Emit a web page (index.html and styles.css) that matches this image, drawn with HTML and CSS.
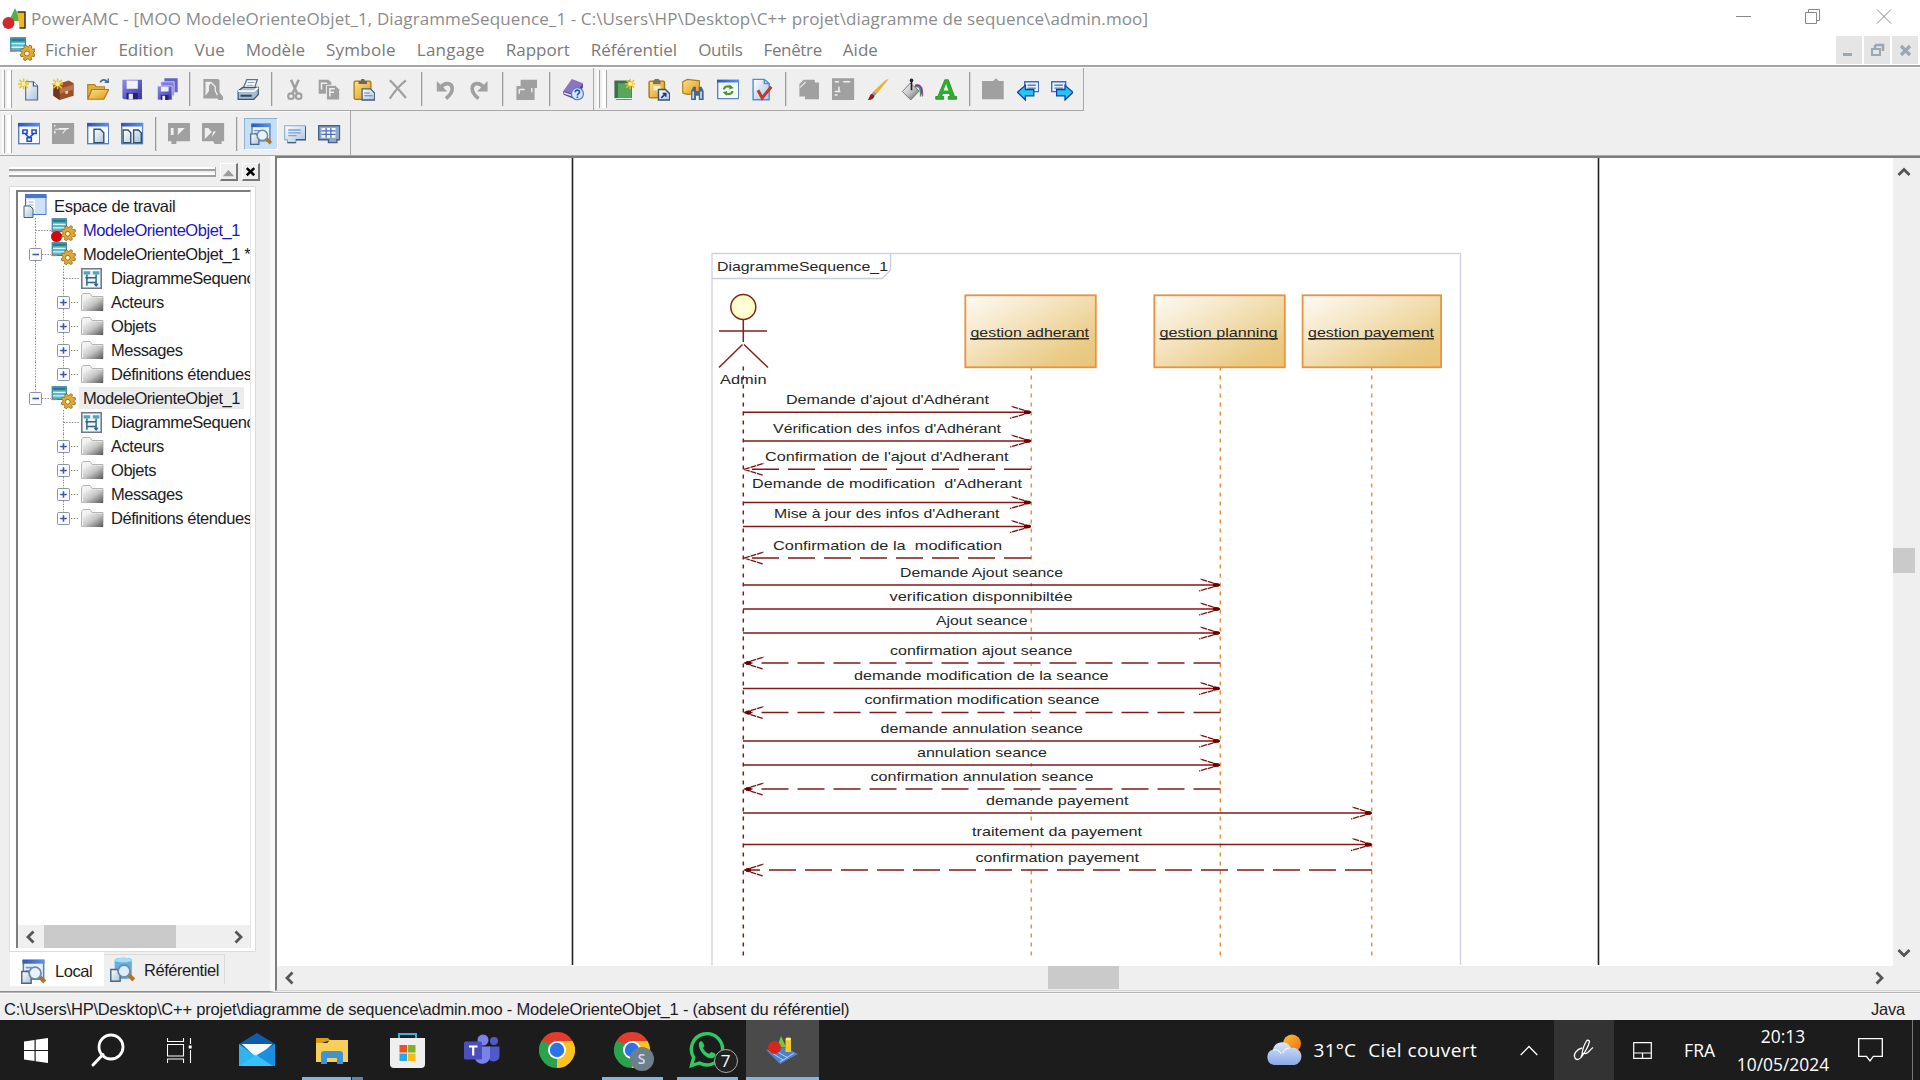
FILE: index.html
```html
<!DOCTYPE html>
<html lang="fr">
<head>
<meta charset="utf-8">
<title>PowerAMC</title>
<link rel="stylesheet" href="styles.css">
</head>
<body>
<svg class="defs" aria-hidden="true">
  <defs>
    <linearGradient id="gSheet" x1="0" y1="0" x2="1" y2="1"><stop offset="0" stop-color="#fff"/><stop offset="1" stop-color="#a9c3de"/></linearGradient>
    <linearGradient id="gBlue" x1="0" y1="0" x2="1" y2="1"><stop offset="0" stop-color="#8d8de8"/><stop offset="1" stop-color="#3434a4"/></linearGradient>
    <linearGradient id="gGold" x1="0" y1="0" x2="1" y2="1"><stop offset="0" stop-color="#ffe28a"/><stop offset="1" stop-color="#d9981c"/></linearGradient>
    <linearGradient id="gGrey" x1="0" y1="0" x2="1" y2="1"><stop offset="0" stop-color="#fafafa"/><stop offset=".5" stop-color="#c4c4c4"/><stop offset="1" stop-color="#555"/></linearGradient>
    <linearGradient id="gBar" x1="0" y1="0" x2="1" y2="0"><stop offset="0" stop-color="#2d55b8"/><stop offset="1" stop-color="#5d93ee"/></linearGradient>
    <linearGradient id="gCard" x1="0" y1="0" x2="1" y2="1"><stop offset="0" stop-color="#fffdf8"/><stop offset=".1" stop-color="#fbf5e9"/><stop offset=".8" stop-color="#eacb85"/><stop offset="1" stop-color="#e8c678"/></linearGradient>
    <radialGradient id="gHead"><stop offset="0" stop-color="#ffffe4"/><stop offset="1" stop-color="#ffffc4"/></radialGradient>
    <linearGradient id="gCloud" x1="0" y1="0" x2="0" y2="1"><stop offset="0" stop-color="#dbe6fb"/><stop offset="1" stop-color="#88a9e6"/></linearGradient>
    <linearGradient id="gSun" x1="0" y1="0" x2="1" y2="1"><stop offset="0" stop-color="#fbc02d"/><stop offset="1" stop-color="#ee6c10"/></linearGradient>
  </defs>

  <symbol id="spark" viewBox="0 0 8 8"><path d="M4 0v8M0 4h8M1 1l6 6M7 1L1 7" stroke="#f2c01e" stroke-width="1.1"/><circle cx="4" cy="4" r="1.5" fill="#fff3a0"/></symbol>
  <symbol id="new" viewBox="0 0 16 16"><path d="M5.500 2.500h5.500l3 3v10h-8.500z" fill="url(#gSheet)" stroke="#4f6a86" stroke-width=".8"/><path d="M11 2.500v3h3" fill="#fff" stroke="#33506e" stroke-width=".8"/><use href="#spark" width="8" height="8"/></symbol>
  <symbol id="case" viewBox="0 0 16 16"><path d="M1 5l11-3.500 3.500 2v9l-10 3-4.500-3z" fill="#96512c"/><path d="M1 5l4.500 2.500v8l-4.500-3z" fill="#6f361a"/><path d="M5.500 7.500l10-3v3.500l-10 3z" fill="#bb7449"/><path d="M9.500 9h2v2h-2z" fill="#f3cda6"/><use href="#spark" width="8" height="8"/></symbol>
  <symbol id="open" viewBox="0 0 16 16"><path d="M.5 14.500v-10h5l1 1.500h6v2.500h-9z" fill="#e2b03e" stroke="#b5831c" stroke-width=".8"/><path d="M.5 15l3-7h12l-3.500 7z" fill="url(#gGold)" stroke="#b17a10" stroke-width=".8"/><path d="M9.500 3c1-2.500 4-2.500 5 0M12.700 2.800h2.600V.2" fill="none" stroke="#4b6f94" stroke-width="1.200"/></symbol>
  <symbol id="save" viewBox="0 0 16 16"><path d="M1 1h14v14H2l-1-1z" fill="url(#gBlue)"/><path d="M4 1.500h8v6H4z" fill="#f3f4fb"/><path d="M4 10.500h8V15H4z" fill="#23236f"/><path d="M5.500 11h3v4h-3z" fill="#e8e8f4"/></symbol>
  <symbol id="saveall" viewBox="0 0 16 16"><path d="M6 0h9.500v10H6z" fill="#6262ca"/><path d="M3.500 2.500H13v10H3.500z" fill="#7c7ce0" stroke="#ebebfa" stroke-width=".5"/><path d="M1 5.500h10.500v10H1z" fill="url(#gBlue)" stroke="#ebebfa" stroke-width=".5"/><path d="M3.500 6h5.500v3.500H3.500z" fill="#eef"/><path d="M3.500 12H9v3.500H3.500z" fill="#23236f"/><path d="M4.500 12.500h2v3h-2z" fill="#eef"/></symbol>
  <symbol id="preview" viewBox="0 0 16 16"><path d="M1 .5h10.500l1 1v8.500l2.500 3v2.500h-3l-1-1H1z" fill="#a0a0a0"/><path d="M6.500 3l3 3v3l1.500 3" fill="none" stroke="#efefef" stroke-width=".9"/><path d="M2.500 2.500H7L5 5.500V9l-2.500 3.500z" fill="#efefef"/></symbol>
  <symbol id="print" viewBox="0 0 16 16"><path d="M4.500 7l2.500-6h7.500l-2 6z" fill="#fff" stroke="#57718c" stroke-width=".9"/><path d="M7.500 3h5M6.800 5h5" stroke="#8ca0b5" stroke-width=".8"/><path d="M.8 9L4 6.500h11.200v5L12 15H.8z" fill="#a9bccf" stroke="#3e5872" stroke-width=".9"/><path d="M.8 9.200H12l3-2.500" fill="none" stroke="#fff" stroke-width="1.300"/><path d="M2.500 12.500h8" stroke="#2e4a68" stroke-width="1.400"/></symbol>
  <symbol id="cut" viewBox="0 0 16 16"><path d="M5 1l4.500 10M10.500 1L6 11" stroke="#a0a0a0" stroke-width="1.800" fill="none"/><circle cx="5" cy="12.800" r="2" fill="none" stroke="#a0a0a0" stroke-width="1.500"/><circle cx="10.500" cy="12.800" r="2" fill="none" stroke="#a0a0a0" stroke-width="1.500"/></symbol>
  <symbol id="copy" viewBox="0 0 16 16"><path d="M.5 1h7l2 2v8h-9z" fill="#a0a0a0"/><path d="M6 5h6.500L15.500 8v7.500H6z" fill="#a0a0a0" stroke="#efefef" stroke-width=".7"/><path d="M2.500 8V3.500h4M8.500 13V7.500h3.500M8.500 10h3" fill="none" stroke="#efefef" stroke-width="1.100"/></symbol>
  <symbol id="paste" viewBox="0 0 16 16"><rect x=".8" y="2" width="12" height="13" rx="1" fill="url(#gGold)" stroke="#a8740f" stroke-width=".9"/><path d="M4 4V2h1.500L6 .5h2L8.500 2H10v2z" fill="#6d675c"/><path d="M6.500 7.500h6l3 3v5h-9z" fill="url(#gSheet)" stroke="#425c7a" stroke-width=".9"/><path d="M8 10.500h4M8 12.500h6" stroke="#6486ad" stroke-width=".8"/></symbol>
  <symbol id="del" viewBox="0 0 16 16"><path d="M2 1.500C6 5 10 10 13.500 14M13.500 1.500C9 5 5 10 2 14.500" stroke="#a0a0a0" stroke-width="1.600" fill="none"/></symbol>
  <symbol id="undo" viewBox="0 0 16 16"><path d="M5 6.500c2.500-4 8-3.500 8 1 0 3-2 5-4.500 7" stroke="#a0a0a0" stroke-width="2.600" fill="none"/><path d="M2 2v7.500h7.500z" fill="#a0a0a0"/></symbol>
  <symbol id="redo" viewBox="0 0 16 16"><path d="M11 6.500c-2.500-4-8-3.500-8 1 0 3 2 5 4.500 7" stroke="#a0a0a0" stroke-width="2.600" fill="none"/><path d="M14 2v7.500H6.500z" fill="#a0a0a0"/></symbol>
  <symbol id="prop" viewBox="0 0 16 16"><path d="M4 1h12v6h-2v8.500H1v-10h3z" fill="#a0a0a0"/><path d="M3 8h4M3 8v3M12 7v3" stroke="#efefef" stroke-width="1"/></symbol>
  <symbol id="help" viewBox="0 0 16 16"><path d="M1 9L7 .5 15 3.500 10 13 1.500 12z" fill="#8a74c4"/><path d="M1 9l8 2.500L15 3.500v3L9 15 1 11.500z" fill="#5a4594"/><path d="M1.500 10.500L9 13" stroke="#e6e0f5" stroke-width="1"/><circle cx="11" cy="11" r="4.300" fill="#d7e6fb" stroke="#5c7fc2" stroke-width=".9"/><path d="M9.500 10c0-2 3.200-2 3 0 0 1-1.500 1-1.500 2.200M11 13v1" stroke="#2456a8" stroke-width="1.200" fill="none"/></symbol>
  <symbol id="book" viewBox="0 0 16 16"><path d="M1 1.500h11l1.500 1.500v12.500H2.500L1 14z" fill="#3e6e4a"/><path d="M3.500 3.500h9.500v10.500H3.500z" fill="#5aa55c"/><path d="M1.500 14.500h12" stroke="#dfe" stroke-width=".8"/><use href="#spark" x="8.500" y="0" width="7.500" height="8"/></symbol>
  <symbol id="pastelink" viewBox="0 0 16 16"><rect x=".8" y="2" width="11" height="12" rx="1" fill="url(#gGold)" stroke="#a8740f"/><path d="M3.500 4V2.200l1.500-1.700h2.500L9 2.200V4z" fill="#7c7156"/><path d="M4 5.500h5v3H4z" fill="#fff3cd"/><path d="M7.500 8h5l3 3v4.500h-8z" fill="url(#gSheet)" stroke="#39536f"/><path d="M9.500 14l3-3M10.500 10.800h2.200v2.400" stroke="#1d2c96" stroke-width="1.100" fill="none"/></symbol>
  <symbol id="find" viewBox="0 0 16 16"><path d="M.5 2.500L4 .8l8.500 1v9L4 11.500l-3.500-1z" fill="url(#gGold)" stroke="#b27c16" stroke-width=".8"/><path d="M6.500 9.500V9L8 6h2v3h2V6h2l1.500 3v6.500H12v-3h-2v3H6.500z" fill="#48698f"/><path d="M8 9.500v5M13.600 9.500v5" stroke="#c8def3" stroke-width="1.200"/></symbol>
  <symbol id="refresh" viewBox="0 0 16 16"><path d="M.5 1.500h15v13H.5z" fill="#f4f9ff" stroke="#6085b5"/><path d="M0 1h16v2H0z" fill="url(#gBar)"/><path d="M5 8c0-2 3-3 5-1.500M11 9c0 2-3 3-5 1.500" stroke="#4b9a1f" stroke-width="1.500" fill="none"/><path d="M9 4.500L12 7 8.800 8zM7 12.500L4 10l3.200-1z" fill="#4b9a1f"/></symbol>
  <symbol id="check" viewBox="0 0 16 16"><path d="M1.500.8h8l3.500 3v11.500H1.500z" fill="url(#gSheet)" stroke="#4a8fd8"/><path d="M9.500.8v3H13" fill="none" stroke="#4a8fd8"/><path d="M5 8.500l3 5.500 6.500-8" fill="none" stroke="#b93a36" stroke-width="2.200"/></symbol>
  <symbol id="grA" viewBox="0 0 16 16"><path d="M1 4l3-3h8v2h3v12H5v-2H1z" fill="#a0a0a0"/><path d="M1.500 6.500l4-4" stroke="#efefef" stroke-width=".8"/></symbol>
  <symbol id="grB" viewBox="0 0 16 16"><path d="M0 0h16v15.500H0z" fill="#a0a0a0"/><path d="M2 2.500h3M8 2.500h5M5 6v3M2 9.500h4M2 12h2" stroke="#efefef" stroke-width="1.100"/></symbol>
  <symbol id="brush" viewBox="0 0 16 16"><path d="M15.500.5L7 11 4.500 9.500 13.500 1z" fill="#e7b233"/><path d="M7 11L4.500 9.500 3.500 11 5.500 12.500z" fill="#8d98a8"/><path d="M5.500 12.500l-2-1.500c-2 1-1.500 3-3 4.500 2.500.2 4.500-.8 5-3z" fill="#8c1f16"/></symbol>
  <symbol id="bucket" viewBox="0 0 16 16"><path d="M6.500 3.500L13 9l-6 6.500L1 9.500z" fill="url(#gGrey)" stroke="#777" stroke-width=".7"/><path d="M7.500 8.500V1.500" stroke="#223" stroke-width="1.200"/><circle cx="7.500" cy="1.500" r="1.300" fill="#223"/><path d="M10 5c3-1.500 6 1 5.500 8" fill="none" stroke="#d83bb3" stroke-width="1.100"/><path d="M10 6.200c3-1.200 4.300 1 4 6.800" fill="none" stroke="#3aa53a" stroke-width="1.100"/><path d="M10 5.500c3-1.500 5.200 1 4.800 6" fill="none" stroke="#3548cf" stroke-width=".9"/></symbol>
  <symbol id="fontA" viewBox="0 0 16 16"><path d="M7 1h2.500l4.500 12h1.500v2H9.500v-2H11l-.8-2.200H5.500L4.700 13h1.500v2H.5v-2H2z" fill="#2fb02d" stroke="#15801a" stroke-width=".5"/><path d="M7.900 4L6.200 8.800h3.400z" fill="#efefef"/></symbol>
  <symbol id="grC" viewBox="0 0 16 16"><path d="M0 2h8l2-2 2 2h3.500v13H0z" fill="#a0a0a0"/></symbol>
  <symbol id="prev" viewBox="0 0 16 16"><path d="M5.500 2.500h10v7h-10z" fill="#e6f0fd" stroke="#3c6fc4"/><path d="M7.500 5h6M7.500 7h6" stroke="#6a7fb0"/><path d="M.3 10L6 5v3h6v4.500H6v3z" fill="#23c5f3" stroke="#0c3fae" stroke-width=".9"/></symbol>
  <symbol id="next" viewBox="0 0 16 16"><path d="M.5 2.500h10v7H.5z" fill="#e6f0fd" stroke="#3c6fc4"/><path d="M2.500 5h6M2.500 7h6" stroke="#6a7fb0"/><path d="M15.700 10L10 5v3H4v4.500h6v3z" fill="#23c5f3" stroke="#0c3fae" stroke-width=".9"/></symbol>
  <symbol id="win" viewBox="0 0 16 16"><path d="M.5.8h15v14.500H.5z" fill="#f6faff" stroke="#5b80b5"/><path d="M0 .5h16V3H0z" fill="url(#gBar)"/></symbol>
  <symbol id="w1" viewBox="0 0 16 16"><use href="#win" width="16" height="16"/><path d="M3.500 5.500h3v2.500h-3zM10 5.500h3v2.500h-3zM6.500 11h3v2.500h-3zM5 8l3 3 3.500-3" fill="none" stroke="#2449cf" stroke-width="1.100"/></symbol>
  <symbol id="w2" viewBox="0 0 16 16"><path d="M0 .5h16v15H0z" fill="#a0a0a0"/><path d="M1.500 2.500h1M5 4.500h7M2 6v2" stroke="#efefef" stroke-width="1"/><path d="M2 5h8l-2.500 3" fill="none" stroke="#efefef" stroke-width=".8"/></symbol>
  <symbol id="w3" viewBox="0 0 16 16"><use href="#win" width="16" height="16"/><path d="M5 5h4.500l2.500 2.500v7H5z" fill="url(#gSheet)" stroke="#33506e"/></symbol>
  <symbol id="w4" viewBox="0 0 16 16"><use href="#win" width="16" height="16"/><path d="M1.500 5.500H5L7 7.500v7H1.500zM9 5.500h3.500l2 2v7H9z" fill="url(#gSheet)" stroke="#33506e"/></symbol>
  <symbol id="w5" viewBox="0 0 16 16"><path d="M0 .5h16v13H6v2H2.500v-2H0z" fill="#a0a0a0"/><path d="M2 4h2v5H2zM7 4h5L7 9z" fill="#efefef"/></symbol>
  <symbol id="w6" viewBox="0 0 16 16"><path d="M0 .5h16v13h-2v2H9l-1-2H0z" fill="#a0a0a0"/><path d="M2 4h2.500L7 7l-5 5zM8 6.500h2l-3 4z" fill="#efefef"/></symbol>
  <symbol id="lens" viewBox="0 0 16 16"><path d="M.5 8h4l2 2v5.500h-6z" fill="url(#gSheet)" stroke="#4a6684" stroke-width=".9"/><path d="M12 11.500l3.200 3.200" stroke="#b0742c" stroke-width="2.600"/><circle cx="9" cy="9" r="3.800" fill="#e8f2fc" fill-opacity=".92" stroke="#7089a3" stroke-width="1.100"/></symbol>
  <symbol id="w7" viewBox="0 0 16 16"><path d="M1.500.8h13V13h-13z" fill="#e6f1ff" stroke="#5b80b5"/><path d="M1 .5h14V3H1z" fill="url(#gBar)"/><path d="M3 5.500h4M3 7.500h2" stroke="#7a96c4"/><use href="#lens" width="16" height="16"/></symbol>
  <symbol id="dbl" viewBox="0 0 16 16"><path d="M3 2c0-2 11-2 11 0v11c0 1.500-11 1.500-11 0z" fill="#5eb0e6"/><ellipse cx="8.500" cy="2" rx="5.500" ry="1.500" fill="#a9dbf7"/><use href="#lens" width="16" height="16"/></symbol>
  <symbol id="w8" viewBox="0 0 16 16"><path d="M.5 2.500h15v10h-7v2h-6v-2h-2z" fill="url(#gSheet)" stroke="#8aa9cc" stroke-width=".8"/><path d="M8.500 14.500h-6M15.500 3v9.500h-7" stroke="#3d5d88" fill="none"/><path d="M3 5.500h9M3 7.500h9M3 9.500h6" stroke="#7ba3d6" stroke-width=".9"/></symbol>
  <symbol id="w9" viewBox="0 0 16 16"><path d="M.5 2.500h15v10h-2v2h-6v-2h-7z" fill="#8fa8c9" stroke="#46618c"/><path d="M2.500 4h10v7h-10z" fill="#f4f8ff"/><path d="M2.500 6.200h10M2.500 8.600h10M5.800 4v7M9.200 4v7" stroke="#4a6bb5" stroke-width=".9"/></symbol>
  <symbol id="model" viewBox="0 0 17 17"><path d="M.5.5h10v9H.5z" fill="#58b9c9" stroke="#35809a" stroke-width=".8"/><path d="M1 1h9v2H1z" fill="#2c7d92"/><path d="M1 4.500h9M1 7h9" stroke="#dff5f8"/><path d="M0 9.500h4" stroke="#e06b6b"/><path d="M15.400 11.200l1.300.6-.6 1.600-1.400-.3-.8.900.4 1.400-1.500.8-.9-1.100h-1.100l-.8 1.200-1.600-.7.400-1.400-.8-.9-1.400.2-.6-1.600 1.300-.8v-1.100l-1.300-.7.700-1.600 1.400.3.800-.8-.3-1.400 1.600-.7.700 1.200h1.200l.8-1.200 1.500.8-.4 1.400.8.800 1.400-.3.600 1.600-1.200.8z" transform="translate(1.200 .6) scale(.95)" fill="#e2a936" stroke="#8f6414" stroke-width=".6"/><circle cx="11.500" cy="11.200" r="1.700" fill="#fff5dc" stroke="#8f6414" stroke-width=".6"/></symbol>
  <symbol id="diag" viewBox="0 0 16 16"><path d="M.6.6h14.800v14.800H.6z" fill="#eef6fb" stroke="#707a84" stroke-width="1.200"/><path d="M2 2.500h5v2.500H2zM9 2.500h5v2.500H9z" fill="#58a3be"/><path d="M4.500 5v8.500M11.500 5v8.500M4.500 7.500h7M4.500 11h7" stroke="#2f6480" stroke-width="1.100"/><path d="M9.500 12h4l-2 2.500zM2.800 7l3.400 0-1.700 2z" fill="#2f6480"/></symbol>
  <symbol id="folder" viewBox="0 0 24 20"><path d="M1.500 18.500V3.500L3 1.500h7l2 3H23v14z" fill="#f2f2f2" stroke="#b5b5b5"/><path d="M3 5.500h20v13.500H3z" fill="url(#gGrey)"/></symbol>
  <symbol id="wksp" viewBox="0 0 24 24"><path d="M2.500 1.500h20.500v19H2.500z" fill="#cfe0fa" stroke="#4b78c4"/><path d="M2 0h21.500v4H2z" fill="#4775d6"/><path d="M4 5.500h8v13H4z" fill="#fff"/><path d="M5.500 8h5M5.500 11h5M5.500 14h5" stroke="#86a8dc"/><path d="M1 12h6l3 3v8.500H1z" fill="url(#gSheet)" stroke="#4a5e75"/></symbol>
  <symbol id="gleaf" viewBox="0 0 34 24"><path d="M18.500 0v24M18.500 12.500H34" stroke="#8a8a8a" stroke-dasharray="1.400 1.400" fill="none"/></symbol>
  <symbol id="gv" viewBox="0 0 34 24"><path d="M18.500 0v24" stroke="#8a8a8a" stroke-dasharray="1.400 1.400"/></symbol>
  <symbol id="gminus" viewBox="0 0 34 24"><path d="M18.500 0v6M18.500 19v5M25 12.500h9" stroke="#8a8a8a" stroke-dasharray="1.400 1.400"/><rect x="12.500" y="6.500" width="12" height="12" rx="1" fill="#fafafa" stroke="#8c96a2"/><path d="M15.500 12.500h6.500" stroke="#3b55a4" stroke-width="1.500"/></symbol>
  <symbol id="gminusl" viewBox="0 0 34 24"><path d="M18.500 0v6M25 12.500h9" stroke="#8a8a8a" stroke-dasharray="1.400 1.400"/><rect x="12.500" y="6.500" width="12" height="12" rx="1" fill="#fafafa" stroke="#8c96a2"/><path d="M15.500 12.500h6.500" stroke="#3b55a4" stroke-width="1.500"/></symbol>
  <symbol id="sleaf" viewBox="0 0 29 24"><path d="M12.500 0v24M12.500 12.500H28" stroke="#8a8a8a" stroke-dasharray="1.400 1.400" fill="none"/></symbol>
  <symbol id="splus" viewBox="0 0 29 24"><path d="M12.500 0v6M12.500 19v5M20 12.500h8" stroke="#8a8a8a" stroke-dasharray="1.400 1.400"/><rect x="6.500" y="6.500" width="12" height="12" rx="1" fill="#fafafa" stroke="#8c96a2"/><path d="M9.200 12.500h6.600M12.500 9.200v6.600" stroke="#3b55a4" stroke-width="1.500"/></symbol>
  <symbol id="splusl" viewBox="0 0 29 24"><path d="M12.500 0v6M20 12.500h8" stroke="#8a8a8a" stroke-dasharray="1.400 1.400"/><rect x="6.500" y="6.500" width="12" height="12" rx="1" fill="#fafafa" stroke="#8c96a2"/><path d="M9.200 12.500h6.600M12.500 9.200v6.600" stroke="#3b55a4" stroke-width="1.500"/></symbol>
  <symbol id="al" viewBox="0 0 12 14"><path d="M9.500 1.500L4 7l5.500 5.500" fill="none" stroke="#555" stroke-width="2.800"/></symbol>
  <symbol id="ar" viewBox="0 0 12 14"><path d="M2.500 1.500L8 7l-5.500 5.500" fill="none" stroke="#555" stroke-width="2.800"/></symbol>
  <symbol id="au" viewBox="0 0 14 12"><path d="M1.500 9L7 3.500 12.500 9" fill="none" stroke="#555" stroke-width="2.800"/></symbol>
  <symbol id="ad" viewBox="0 0 14 12"><path d="M1.500 3L7 8.500 12.500 3" fill="none" stroke="#555" stroke-width="2.800"/></symbol>
  <symbol id="chrome" viewBox="0 0 36 36"><path d="M18 18L2.410 9A18 18 0 0 1 33.590 9z" fill="#e33b2e"/><path d="M18 18L33.590 9A18 18 0 0 1 18 36z" fill="#fcc31e"/><path d="M18 18L18 36A18 18 0 0 1 2.410 9z" fill="#2ba24c"/><path d="M18 9h15.590L26 18z" fill="#fcc31e"/><path d="M10.200 22.500L2.410 9 12 12z" fill="#2ba24c"/><path d="M25.800 22.500L18 36l8-2 6-12-3-9z" fill="#fcc31e"/><circle cx="18" cy="18" r="9" fill="#fff"/><circle cx="18" cy="18" r="7.200" fill="#2a74e8"/></symbol>
  <symbol id="arrR" viewBox="0 0 24 16" overflow="visible"><path d="M24 8L4 2M24 8L3 14" stroke="#7c1010" stroke-width="1.300" stroke-dasharray="6 .8" fill="none"/><path d="M17 6.200h5.500L24 8l-1.500 1.800H17z" fill="#6e0000"/></symbol>
  <symbol id="arrL" viewBox="0 0 24 16" overflow="visible"><path d="M0 8l20-6M0 8l19 6" stroke="#7c1010" stroke-width="1.300" stroke-dasharray="6 .8" fill="none"/></symbol>
  <symbol id="arrLF" viewBox="0 0 24 16" overflow="visible"><use href="#arrL" width="24" height="16"/><path d="M7 6.200H2.500L1 8l1.500 1.800H7z" fill="#6e0000"/></symbol>
</svg>

<header class="titlebar">
  <svg class="app" viewBox="0 0 24 24"><path d="M7 14L13 1l6 13z" fill="#4fb04f"/><circle cx="6.500" cy="16" r="6" fill="#d02a2a"/><path d="M15.500 5h7.500v16h-5.500" fill="#f3b623" stroke="#3a3020" stroke-width="1.500"/></svg>
  <span class="t title">PowerAMC - [MOO ModeleOrienteObjet_1, DiagrammeSequence_1 - C:\Users\HP\Desktop\C++ projet\diagramme de sequence\admin.moo]</span>
  <svg class="winctl" viewBox="0 0 156 18" fill="none" stroke="#888"><path d="M0 8.500h15M69.500 4.500h11v11h-11zM72.500 4V1.500h11v11H81M141 1.500l14 14M155 1.500l-14 14"/></svg>
</header>

<nav class="menubar">
  <svg class="mico" viewBox="0 0 17 17"><use href="#model"/></svg>
  <span class="t">Fichier</span><span class="t">Edition</span><span class="t">Vue</span><span class="t">Modèle</span><span class="t wide">Symbole</span><span class="t wide">Langage</span><span class="t">Rapport</span><span class="t">Référentiel</span><span class="t tight">Outils</span><span class="t tight">Fenêtre</span><span class="t">Aide</span>
  <div class="mdi">
    <svg viewBox="0 0 26 28"><path d="M7 17h9v3H7z" fill="#9aa8b5"/></svg>
    <svg viewBox="0 0 26 28"><path d="M11 9h8v6M11 9v3" fill="none" stroke="#9aa8b5" stroke-width="2.500"/><path d="M8 13h8v6H8z" fill="none" stroke="#9aa8b5" stroke-width="2"/></svg>
    <svg viewBox="0 0 26 28"><path d="M9 10l9 9M18 10l-9 9" stroke="#9aa8b5" stroke-width="3.200"/></svg>
  </div>
</nav>

<section class="bars">
  <div class="row">
    <div class="bar">
      <i class="grip"></i>
      <svg><use href="#new"/></svg><svg><use href="#case"/></svg><svg><use href="#open"/></svg><svg><use href="#save"/></svg><svg><use href="#saveall"/></svg><i class="sep"></i>
      <svg><use href="#preview"/></svg><svg><use href="#print"/></svg><i class="sep"></i>
      <svg><use href="#cut"/></svg><svg><use href="#copy"/></svg><svg><use href="#paste"/></svg><svg><use href="#del"/></svg><i class="sep"></i>
      <svg><use href="#undo"/></svg><svg><use href="#redo"/></svg><i class="sep"></i>
      <svg><use href="#prop"/></svg><i class="sep"></i>
      <svg><use href="#help"/></svg>
    </div>
    <div class="bar second">
      <i class="grip"></i>
      <svg><use href="#book"/></svg><svg><use href="#pastelink"/></svg><svg><use href="#find"/></svg><svg><use href="#refresh"/></svg><svg><use href="#check"/></svg><i class="sep"></i>
      <svg><use href="#grA"/></svg><svg><use href="#grB"/></svg><svg><use href="#brush"/></svg><svg><use href="#bucket"/></svg><svg><use href="#fontA"/></svg><i class="sep"></i>
      <svg><use href="#grC"/></svg><svg><use href="#prev"/></svg><svg><use href="#next"/></svg>
    </div>
  </div>
  <div class="row">
    <div class="bar">
      <i class="grip"></i>
      <svg><use href="#w1"/></svg><svg><use href="#w2"/></svg><svg><use href="#w3"/></svg><svg><use href="#w4"/></svg><i class="sep"></i>
      <svg><use href="#w5"/></svg><svg><use href="#w6"/></svg><i class="sep"></i>
      <svg class="on"><use href="#w7"/></svg><svg><use href="#w8"/></svg><svg><use href="#w9"/></svg>
    </div>
  </div>
</section>

<main class="main">
  <aside class="panel">
    <div class="phead">
      <i class="lines"></i>
      <svg class="pb" viewBox="0 0 16 16"><path d="M2 13l6-6.500 6 6.500z" fill="#9b9b9b"/></svg>
      <svg class="pb" viewBox="0 0 16 16"><path d="M4 4.500l8 7.500M12 4.500l-8 7.500" stroke="#000" stroke-width="2.600"/></svg>
    </div>
    <div class="pbox">
      <div class="tree">
        <div class="nodes">
          <div class="n root"><svg class="iw"><use href="#wksp"/></svg><span class="t esp">Espace de travail</span></div>
          <div class="n"><svg class="g1"><use href="#gleaf"/></svg><span class="im"><svg><use href="#model"/></svg><i class="dot"></i></span><span class="t lk m">ModeleOrienteObjet_1</span></div>
          <div class="n"><svg class="g1"><use href="#gminus"/></svg><span class="im"><svg><use href="#model"/></svg></span><span class="t m">ModeleOrienteObjet_1 *</span></div>
          <div class="n"><svg class="g1"><use href="#gv"/></svg><svg class="g2"><use href="#sleaf"/></svg><svg class="id"><use href="#diag"/></svg><span class="t">DiagrammeSequenc</span></div>
          <div class="n"><svg class="g1"><use href="#gv"/></svg><svg class="g2"><use href="#splus"/></svg><svg class="if"><use href="#folder"/></svg><span class="t">Acteurs</span></div>
          <div class="n"><svg class="g1"><use href="#gv"/></svg><svg class="g2"><use href="#splus"/></svg><svg class="if"><use href="#folder"/></svg><span class="t">Objets</span></div>
          <div class="n"><svg class="g1"><use href="#gv"/></svg><svg class="g2"><use href="#splus"/></svg><svg class="if"><use href="#folder"/></svg><span class="t">Messages</span></div>
          <div class="n"><svg class="g1"><use href="#gv"/></svg><svg class="g2"><use href="#splusl"/></svg><svg class="if"><use href="#folder"/></svg><span class="t">Définitions étendues</span></div>
          <div class="n"><svg class="g1"><use href="#gminusl"/></svg><span class="im"><svg><use href="#model"/></svg></span><span class="t m sel">ModeleOrienteObjet_1</span></div>
          <div class="n"><svg class="g1"></svg><svg class="g2"><use href="#sleaf"/></svg><svg class="id"><use href="#diag"/></svg><span class="t">DiagrammeSequenc</span></div>
          <div class="n"><svg class="g1"></svg><svg class="g2"><use href="#splus"/></svg><svg class="if"><use href="#folder"/></svg><span class="t">Acteurs</span></div>
          <div class="n"><svg class="g1"></svg><svg class="g2"><use href="#splus"/></svg><svg class="if"><use href="#folder"/></svg><span class="t">Objets</span></div>
          <div class="n"><svg class="g1"></svg><svg class="g2"><use href="#splus"/></svg><svg class="if"><use href="#folder"/></svg><span class="t">Messages</span></div>
          <div class="n"><svg class="g1"></svg><svg class="g2"><use href="#splusl"/></svg><svg class="if"><use href="#folder"/></svg><span class="t">Définitions étendues</span></div>
        </div>
        <div class="hs"><svg class="a"><use href="#al"/></svg><i class="thumb"></i><svg class="a end"><use href="#ar"/></svg></div>
      </div>
    </div>
    <div class="tabs">
      <div class="tab cur"><svg><use href="#w7"/></svg><span class="t loc">Local</span></div>
      <div class="tab"><svg><use href="#dbl"/></svg><span class="t ref">Référentiel</span></div>
    </div>
  </aside>

  <section class="doc">
    <div class="view">
      <svg class="canvas" viewBox="277 158 1616 808">
        <path d="M572.500 158v807M1598.500 158v807" stroke="#222" stroke-width="1.600"/>
        <path d="M712 965V253.500H1460.500V965" fill="none" stroke="#d2d3e0" stroke-width="1.400"/>
        <path d="M712 278.500h170l8.500-8.500v-16.500" fill="none" stroke="#c9cde0" stroke-width="1.400"/>
        <text x="717" y="270.500" textLength="171" lengthAdjust="spacingAndGlyphs">DiagrammeSequence_1</text>
        <g stroke="#e8923a" stroke-width="1.500" stroke-dasharray="4 5"><path d="M1031.300 366.500V957M1220.300 366.500V957M1371.700 366.500V957" /></g>
        <g fill="url(#gCard)" stroke="#ec923c" stroke-width="1.800"><rect x="965.300" y="295.300" width="130.500" height="72"/><rect x="1154.300" y="295.300" width="130.500" height="72"/><rect x="1302.600" y="295.300" width="138.500" height="72"/></g>
        <path d="M970 338.700h119M1159.500 338.700H1278M1308 338.700h126" stroke="#3a2e1a" stroke-width="1.400"/>
        <text x="970.500" y="336.500" textLength="118.500" lengthAdjust="spacingAndGlyphs">gestion adherant</text>
        <text x="1159.500" y="336.500" textLength="118" lengthAdjust="spacingAndGlyphs">gestion planning</text>
        <text x="1308" y="336.500" textLength="126" lengthAdjust="spacingAndGlyphs">gestion payement</text>
        <circle cx="743.300" cy="307" r="12.500" fill="url(#gHead)" stroke="#861f1f" stroke-width="1.500"/>
        <path d="M743.300 320v22M719 331h48M742.500 344.500L719 367.500M744 344.500l24 23" fill="none" stroke="#861f1f" stroke-width="1.500"/>
        <text x="720" y="384" textLength="46.500" lengthAdjust="spacingAndGlyphs">Admin</text>
        <path d="M743.300 366.500V957" stroke="#841818" stroke-width="1.500" stroke-dasharray="4 5"/>

        <g fill="#fff"><rect x="896" y="562.500" width="170" height="20"/><rect x="886" y="586.500" width="190" height="20"/><rect x="850" y="666" width="262" height="20"/><rect x="886" y="640.500" width="190" height="20"/><rect x="860" y="690" width="243" height="20"/><rect x="877" y="718.500" width="210" height="20"/><rect x="913" y="743" width="138" height="20"/><rect x="866" y="767" width="231" height="20"/><rect x="982" y="791" width="150" height="19"/><rect x="968" y="822" width="178" height="20"/><rect x="972" y="848" width="171" height="20"/></g>

        <g stroke="#841818" stroke-width="1.500">
          <path d="M743 412.300h288M743 441h288M743 502.500h288M743 526.500h288M743 585h477M743 609h477M743 633h477M743 688.500h477M743 741h477M743 765h477M743 813h628M743 844.600h628"/>
          <path stroke-dasharray="27 9" d="M1031 469.300H745M1031 558H745M1220.500 663H745M1220.500 712.500H745M1220.500 789H745M1372 870H745"/>
        </g>
        <g>
          <use href="#arrR" x="1007" y="404.300" width="24" height="16"/><use href="#arrR" x="1007" y="433" width="24" height="16"/><use href="#arrR" x="1007" y="494.500" width="24" height="16"/><use href="#arrR" x="1007" y="518.500" width="24" height="16"/>
          <use href="#arrR" x="1196" y="577" width="24" height="16"/><use href="#arrR" x="1196" y="601" width="24" height="16"/><use href="#arrR" x="1196" y="625" width="24" height="16"/><use href="#arrR" x="1196" y="680.500" width="24" height="16"/><use href="#arrR" x="1196" y="733" width="24" height="16"/><use href="#arrR" x="1196" y="757" width="24" height="16"/>
          <use href="#arrR" x="1348" y="805" width="24" height="16"/><use href="#arrR" x="1348" y="836.600" width="24" height="16"/>
          <use href="#arrL" x="744" y="461.300" width="24" height="16"/><use href="#arrL" x="744" y="550" width="24" height="16"/>
          <use href="#arrLF" x="744" y="655" width="24" height="16"/><use href="#arrLF" x="744" y="704.500" width="24" height="16"/><use href="#arrLF" x="744" y="781" width="24" height="16"/><use href="#arrLF" x="744" y="862" width="24" height="16"/>
        </g>
        <text x="786" y="404.200" textLength="203" lengthAdjust="spacingAndGlyphs">Demande d'ajout d'Adhérant</text>
        <text x="773" y="432.700" textLength="228" lengthAdjust="spacingAndGlyphs">Vérification des infos d'Adhérant</text>
        <text x="765" y="461.300" textLength="243.500" lengthAdjust="spacingAndGlyphs">Confirmation de l'ajout d'Adherant</text>
        <text x="752" y="488.300" textLength="270" lengthAdjust="spacingAndGlyphs">Demande de modification&#160; d'Adherant</text>
        <text x="774" y="518.300" textLength="225.500" lengthAdjust="spacingAndGlyphs">Mise à jour des infos d'Adherant</text>
        <text x="773" y="549.800" textLength="229" lengthAdjust="spacingAndGlyphs">Confirmation de la&#160; modification</text>
        <text x="900" y="576.800" textLength="163" lengthAdjust="spacingAndGlyphs">Demande Ajout seance</text>
        <text x="889.500" y="600.700" textLength="183" lengthAdjust="spacingAndGlyphs">verification disponnibiltée</text>
        <text x="936" y="624.700" textLength="91.500" lengthAdjust="spacingAndGlyphs">Ajout seance</text>
        <text x="890" y="654.800" textLength="182.500" lengthAdjust="spacingAndGlyphs">confirmation ajout seance</text>
        <text x="854" y="680.300" textLength="254.500" lengthAdjust="spacingAndGlyphs">demande modification de la seance</text>
        <text x="864.500" y="704.300" textLength="235" lengthAdjust="spacingAndGlyphs">confirmation modification seance</text>
        <text x="880.500" y="732.700" textLength="202.500" lengthAdjust="spacingAndGlyphs">demande annulation seance</text>
        <text x="917" y="756.800" textLength="130" lengthAdjust="spacingAndGlyphs">annulation seance</text>
        <text x="870.500" y="780.800" textLength="223" lengthAdjust="spacingAndGlyphs">confirmation annulation seance</text>
        <text x="986" y="804.800" textLength="142.500" lengthAdjust="spacingAndGlyphs">demande payement</text>
        <text x="972" y="836.300" textLength="170" lengthAdjust="spacingAndGlyphs">traitement da payement</text>
        <text x="975.500" y="861.800" textLength="163.500" lengthAdjust="spacingAndGlyphs">confirmation payement</text>
      </svg>
      <div class="vs"><svg class="b"><use href="#au"/></svg><i class="vthumb"></i><svg class="b"><use href="#ad"/></svg></div>
    </div>
    <div class="hs"><svg class="a"><use href="#al"/></svg><i class="thumb"></i><svg class="a end"><use href="#ar"/></svg></div>
  </section>
</main>

<footer class="status"><span class="t path">C:\Users\HP\Desktop\C++ projet\diagramme de sequence\admin.moo - ModeleOrienteObjet_1 - (absent du référentiel)</span><span class="t java">Java</span></footer>

<div class="taskbar">
  <div class="tk start"><svg width="24" height="25" viewBox="0 0 24 25" fill="#fff"><path d="M0 3.500L10.500 2v10H0zM11.700 1.800L24 0v12H11.700zM0 13h10.500v10L0 21.500zM11.700 13H24v12l-12.300-1.800z"/></svg></div>
  <div class="tk find"><svg width="36" height="36" viewBox="0 0 36 36"><path d="M13 22.500L3 33" stroke="#fff" stroke-width="3" stroke-linecap="round"/><circle cx="21" cy="15" r="12" fill="none" stroke="#fff" stroke-width="2.800"/></svg></div>
  <div class="tk tview"><svg width="26" height="25" viewBox="0 0 26 25" fill="none" stroke="#fff" stroke-width="1.100"><path d="M.5 0v3.500h16V0M.5 6.500h16v11.500H.5zM.5 25v-4h16v4M23.500 0v6M23.500 12v13"/><path d="M21.700 7.500h3v3h-3z" fill="#fff" stroke="none"/></svg></div>
  <div class="tk"><svg width="36" height="34" viewBox="0 0 36 34"><path d="M0 11L18 0l18 11v5H0z" fill="#0f5cab"/><path d="M3 11h30L18 26z" fill="#f4fbff"/><path d="M0 11l18 13L36 11v22H0z" fill="#2fb4f0"/><path d="M3 11h30L18 22z" fill="#f4fbff"/><path d="M36 11v22H32L16 21l2 1z" fill="#1a8fe0"/><path d="M0 33l17-11 17 11z" fill="#35c3fa"/></svg></div>
  <div class="tk run two"><svg width="32" height="27" viewBox="0 0 32 27"><path d="M0 1h12l3 3h-3L0 8z" fill="#d89c15"/><path d="M0 6h11l3-3h18v22H0z" fill="#f9cf57"/><path d="M5 27V17q0-3 3-3h16q3 0 3 3v10h-6v-6H11v6z" fill="#3f93d2"/></svg></div>
  <div class="tk"><svg width="35" height="35" viewBox="0 0 35 35"><path d="M9 9V1h17v8" fill="none" stroke="#3bb1e2" stroke-width="2"/><path d="M0 5h35v26q0 4-4 4H4q-4 0-4-4z" fill="#efefef"/><path d="M9.500 12h7.500v7.500H9.500z" fill="#e8512a"/><path d="M18 12h7.500v7.500H18z" fill="#7cb51d"/><path d="M9.500 20.500h7.500V28H9.500z" fill="#28a8e8"/><path d="M18 20.500h7.500V28H18z" fill="#fbb915"/></svg></div>
  <div class="tk"><svg width="36" height="33" viewBox="0 0 36 33"><circle cx="19" cy="6" r="5.500" fill="#7b83eb"/><circle cx="30" cy="7" r="4" fill="#5059c9"/><path d="M25 12.500h10.500V22a6 6 0 0 1-10 4z" fill="#5059c9"/><path d="M11 12.500h15V24a8 8 0 0 1-15 1z" fill="#7b83eb"/><rect y="7.500" width="18" height="18" rx="1.500" fill="#4a4fbd"/><path d="M5 12.500h8.500M9.200 12.500v9" stroke="#fff" stroke-width="2.200"/></svg></div>
  <div class="tk"><svg width="36" height="36"><use href="#chrome"/></svg></div>
  <div class="tk run"><svg width="36" height="36"><use href="#chrome"/></svg><span class="badge s">S</span></div>
  <div class="tk run"><svg width="36" height="36" viewBox="0 0 36 36"><path d="M2.500 33.500l2.200-8A15.600 15.600 0 1 1 10.500 31z" fill="none" stroke="#2fc964" stroke-width="3.400"/><path d="M10 11c1-2 3-2.500 4-.5l1.300 3c.3 1-1.300 2-1.300 2.800 1.200 2.600 3.200 4.500 6 5.500.8 0 1.800-2 2.600-1.800l3.400 1.600c1.500 1-.2 4.200-3 4.700C17 27 8.500 18 10 11z" fill="#2fc964"/></svg><span class="badge n7">7</span></div>
  <div class="tk run act"><svg width="34" height="30" viewBox="0 0 34 30"><path d="M1 15l18-3 14 7-18 10z" fill="#4f81c8"/><path d="M4 16l14 9M9 15l14 8M15 27l14-9" stroke="#b5d0f5"/><path d="M12 12L16 1l5 11z" fill="#7cc142"/><circle cx="9.500" cy="12.500" r="6.500" fill="#d9261c"/><path d="M20.500 4h5.500v13h-5.500z" fill="#f3c92c"/><ellipse cx="23.300" cy="4" rx="2.800" ry="1.400" fill="#ffe98a"/></svg></div>
  <div class="tray">
    <svg class="wx" width="37" height="32" viewBox="0 0 37 32"><circle cx="26" cy="9.500" r="9" fill="url(#gSun)"/><path d="M8 31a8 8 0 0 1-1-15.500A9.500 9.500 0 0 1 25 14a8.500 8.500 0 0 1 3.500 17z" fill="url(#gCloud)"/><path d="M7 16c4-1 7 1 8 4M24 14c-3 0-6 2-7 5" fill="none" stroke="#f2f6ff" stroke-width="1.200"/></svg>
    <span class="t temp">31°C</span><span class="t sky">Ciel couvert</span>
    <svg class="chev" width="18" height="11" viewBox="0 0 18 11"><path d="M.7 10L9 1.500 17.300 10" fill="none" stroke="#fff" stroke-width="1.300"/></svg>
    <div class="pen"><svg width="22" height="22" viewBox="0 0 22 22" fill="none" stroke="#fff" stroke-width="1.300"><path d="M9 17c0-5 2-11 4.500-15 1-1.500 3.500-.5 2.800 1.300C15 8 12 13 9 17zM9 9c-5 1-9 6-7 10 1.500 3 6 1 6.500-2 .8-3 2-3 3.500-2.500 3 .8 5-4 8-6"/></svg></div>
    <svg class="pad" width="19" height="17" viewBox="0 0 19 17" fill="none" stroke="#fff" stroke-width="1.200"><path d="M.7.7h17.600v15.600H.7zM.7 11h17.600M9.500 11v5"/></svg>
    <span class="t fra">FRA</span>
    <div class="clock"><span class="t">20:13</span><span class="t">10/05/2024</span></div>
    <svg class="note" width="25" height="24" viewBox="0 0 25 24" fill="none" stroke="#fff" stroke-width="1.300"><path d="M.7.700h23.600v17.600h-9l-3.300 4.500-3.500-4.500H.7z"/></svg>
    <i class="desk"></i>
  </div>
</div>
</body>
</html>
```
FILE: styles.css
```css
* { box-sizing: border-box; }
html, body { margin: 0; height: 100%; }
body {
  width: 1920px; height: 1080px; overflow: hidden;
  display: flex; flex-direction: column;
  background: #efefef; color: #1c1c24;
  font-family: "Liberation Sans", Arial, sans-serif; font-size: 16.500px; line-height: 24px; letter-spacing: -.45px;
}
svg { display: block; flex: none; }
.t { white-space: pre; flex: none; }
.defs { position: absolute; width: 0; height: 0; }

.titlebar { height: 36px; flex: none; display: flex; align-items: center; background: #fff; padding: 2px 28px 0 2px; }
.app { width: 24px; height: 24px; margin-right: 5px; }
.title { font: 17px/24px "Open Sans", "Noto Sans", sans-serif; letter-spacing: .11px; color: #8b8b8b; }
.winctl { width: 156px; height: 18px; margin: -5px 0 0 auto; }

.menubar { height: 31px; flex: none; display: flex; align-items: center; gap: 21px; background: #fff; border-bottom: 2px solid #a5a5a5; padding: 0 2px 2px 10px; font: 17px/24px "Open Sans", "Noto Sans", sans-serif; letter-spacing: 0; color: #7a7a7a; }
.wide { letter-spacing: .25px; }
.tight { letter-spacing: -.35px; }
.mico { width: 25px; height: 25px; margin-right: -11px; }
.mdi { margin-left: auto; display: flex; gap: 2px; align-self: flex-start; }
.mdi svg { width: 26px; height: 28px; background: #e5e5e5; }

.bars { flex: none; height: 89px; border-top: 1px solid #fff; border-bottom: 1px solid #a8a8a8; display: flex; flex-direction: column; }
.row { display: flex; height: 43px; }
.row + .row { height: 44px; }
.bar { display: flex; align-items: center; border-right: 1px solid #a8a8a8; border-bottom: 1px solid #a8a8a8; padding-right: 3px; box-shadow: inset 0 1px #fafafa; }
.row + .row .bar { border-bottom: 0; padding-top: 1px; }
.bar svg { width: 22.400px; height: 23px; margin: 0 6px; }
.bar .on { width: 34px; height: 32px; margin: 0 .2px; padding: 4px 5px; background: #c5dff5; border: 1px solid #8fb2d0; border-right-color: #fff; border-bottom-color: #fff; }
.sep { width: 2px; height: 34px; background: #9a9a9a; border-right: 1px solid #d8d8d8; margin: 0 5px 0 5.500px; }
.grip { width: 10px; height: 38px; margin: 0 0 0 2px; border-right: 1px solid #a5a5a5; background: linear-gradient(90deg, #fff 0 1px, #f6f6f6 1px 2px, #a5a5a5 2px 3px, transparent 3px 5px, #fff 5px 7px); }
.second { padding-right: 4px; }
.second .grip { margin-left: 3px; }

.main { flex: 1; min-height: 0; display: flex; border-bottom: 1px solid #b5b5b5; }
.panel { width: 275px; flex: none; border-right: 5px solid #f8f8f8; border-bottom: 1px solid #8f8f8f; padding: 7px 0 0 9px; display: flex; flex-direction: column; }
.phead { display: flex; height: 18px; align-items: flex-start; gap: 4px; }
.lines { width: 207px; height: 10px; margin: 4px 0 0; border: solid #a0a0a0; border-width: 0 1px 2px 0; background: linear-gradient(#fff 0 2px, #a0a0a0 2px 4px, #efefef 4px 6px, #fff 6px 8px); }
.pb { width: 18px; height: 18px; border: 1px solid #fff; border-right: 2px solid #777; border-bottom: 2px solid #777; }
.pbox { width: 247px; margin-top: 5px; height: 766px; background: #fff; border: 1px solid #dcdcdc; padding: 3px 4px 3px 6px; }
.tree { height: 100%; display: flex; flex-direction: column; border: solid #7d7d7d; border-width: 2px 0 0 2px; border-right: 1px solid #e4e4e4; }
.nodes { flex: 1; overflow: hidden; padding-top: 2px; }
.n { display: flex; align-items: center; height: 24px; margin-left: -1px; }
.iw { width: 24px; height: 24px; margin: 0 7px 0 6px; }
.g1 { width: 34px; height: 24px; }
.g2 { width: 29px; height: 24px; }
.im { position: relative; width: 25px; margin-right: 7px; flex: none; }
.im svg { width: 25px; height: 24px; }
.dot { position: absolute; left: 0; bottom: 0; width: 11px; height: 11px; border-radius: 50%; background: #d60606; }
.id { width: 21px; height: 21px; margin: 0 9px 0 1px; }
.if { width: 24px; height: 20px; margin-right: 7px; }
.n .t { line-height: 22px; }
.esp { letter-spacing: -.3px; }
.lk { color: #1c18b8; }
.sel { background: #ececec; padding: 0 4px; margin-left: -4px; }
.hs { display: flex; align-items: center; background: #efefef; }
.hs .thumb { background: #cacaca; }
.a { width: 12px; height: 14px; }
.end { margin-left: auto; }
.tree .hs { height: 23px; flex: none; padding: 0 5px 0 6px; }
.tree .thumb { width: 132px; height: 23px; margin-left: 8px; }
.tabs { display: flex; align-items: flex-start; padding-left: 1px; }
.tab { display: flex; align-items: center; gap: 9px; height: 30px; width: 121px; margin-top: 2px; padding: 0 6px; border: solid #dadada; border-width: 1px 1px 0 0; }
.tab.cur { width: 94px; height: 34px; margin-top: 0; padding: 4px 0 0 11px; background: #fff; border: 0; }
.tab svg { width: 25px; height: 25px; }

.doc { flex: 1; min-width: 0; display: flex; flex-direction: column; border: solid #7d7d7d; border-width: 2px 0 0 2px; border-bottom: 1px solid #d5d5d5; margin-bottom: 1px; }
.view { display: flex; height: 808px; }
.canvas { width: 1616px; height: 808px; background: #fff; font-size: 13.500px; letter-spacing: 0; fill: #262626; }
.vs { width: 25px; display: flex; flex-direction: column; align-items: center; padding: 8px 3px 7px 0; }
.vthumb { width: 22px; height: 25px; background: #cacaca; margin-top: 370px; margin-bottom: auto; }
.b { width: 14px; height: 12px; flex: none; }
.doc .hs { height: 23px; padding: 0 34px 0 6px; }
.doc .thumb { width: 71px; height: 23px; margin-left: 753px; }

.status { height: 27px; flex: none; display: flex; justify-content: space-between; align-items: center; border-top: 1px solid #fafafa; padding: 4px 15px 0 4px; letter-spacing: -.2px; }

.taskbar { height: 60px; flex: none; display: flex; background: #1c1c1c; color: #fff; font: 18px/28px "Open Sans", "Noto Sans", sans-serif; letter-spacing: 0; }
.tk { position: relative; width: 61px; margin-right: 14px; display: flex; align-items: center; justify-content: center; }
.tk.start { width: 72px; margin: 0; }
.tk.find { width: 72px; margin: 0; }
.tk.tview { width: 72px; margin: 0 10.500px 0 0; }
.tk.run { border-bottom: 3px solid #7bb8e6; padding-top: 3px; }
.tk.two { border-image: linear-gradient(90deg, #7bb8e6 0 47px, #1c1c1c 47px 48px, #5a86a8 48px) 3; border-width: 0 0 3px; }
.tk.act { width: 73px; background: #4a4a4a; margin: 0 0 0 -6px; }
.badge { position: absolute; width: 24px; height: 24px; border-radius: 50%; text-align: center; line-height: 24px; }
.s { left: 28px; top: 27px; background: #6d7f8b; color: #d5dde2; font-size: 14px; font-weight: 600; }
.n7 { left: 37px; top: 29px; background: #222; border: 1px solid #aaa; font-size: 17px; line-height: 22px; }
.tray { margin-left: auto; display: flex; align-items: center; }
.temp { margin: 0 12px 0 11px; font-size: 19px; letter-spacing: .2px; }
.sky { font-size: 19px; letter-spacing: .4px; }
.chev { margin-left: 43px; }
.pen { width: 60px; height: 60px; margin-left: 16px; background: #333; display: flex; align-items: center; justify-content: center; }
.pad { margin-left: 19px; }
.fra { margin-left: 32px; font-size: 17.500px; }
.clock { margin-left: 22px; width: 92px; display: flex; flex-direction: column; align-items: center; font-size: 17.400px; }
.note { margin-left: 29px; }
.desk { width: 1px; height: 60px; background: #777; margin: 0 7px 0 29px; }
```
